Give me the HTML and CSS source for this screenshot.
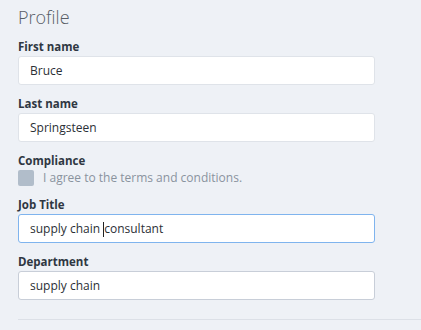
FILE: index.html
```html
<!DOCTYPE html>
<html>
<head>
<meta charset="utf-8">
<link rel="stylesheet" href="styles.css">
</head>
<body>
<div class="page">
  <h1 class="title">Profile</h1>
  <div class="field">
    <div class="label">First name</div>
    <div class="input">Bruce</div>
  </div>
  <div class="field">
    <div class="label">Last name</div>
    <div class="input">Springsteen</div>
  </div>
  <div class="field">
    <div class="label">Compliance</div>
    <div class="check-row">
      <span class="checkbox"></span>
      <span class="check-text">I agree to the terms and conditions.</span>
    </div>
  </div>
  <div class="field">
    <div class="label">Job Title</div>
    <div class="input focused">supply chain <span class="caret"></span>consultant</div>
  </div>
  <div class="field">
    <div class="label">Department</div>
    <div class="input hovered">supply chain</div>
  </div>
  <div class="divider"></div>
</div>
</body>
</html>
```

FILE: styles.css
```css
html, body {
  margin: 0;
  padding: 0;
  background: #eef1f6;
}
body {
  font-family: "Open Sans", "Noto Sans", sans-serif;
  color: #2f3742;
}
.page {
  padding: 5px 0 0 18px;
}
.title {
  margin: 0 0 10px 0;
  font-size: 18px;
  line-height: 24px;
  font-weight: 300;
  color: #585d66;
}
.field {
  margin-bottom: 11px;
  width: 357px;
}
.label {
  font-size: 11.5px;
  line-height: 16px;
  font-weight: 700;
  color: #2f3742;
  margin-bottom: 1px;
}
.input {
  box-sizing: border-box;
  height: 29px;
  width: 357px;
  padding: 0 11px;
  background: #ffffff;
  border: 1px solid #dfe3e9;
  border-radius: 3px;
  font-size: 12px;
  line-height: 27px;
  color: #2b2f36;
  white-space: pre;
}
.input.focused {
  border-color: #7fb4ee;
}
.input.hovered {
  border-color: #c8ced8;
}
.caret {
  display: inline-block;
  width: 1px;
  height: 15px;
  background: #222;
  vertical-align: -4px;
}
.check-row {
  display: flex;
  align-items: center;
  gap: 9px;
  height: 16px;
  margin-top: 0;
  margin-bottom: 3px;
}
.checkbox {
  width: 16px;
  height: 16px;
  border-radius: 2px;
  background: #b1bdca;
  flex: none;
}
.check-text {
  font-size: 12px;
  color: #8a939e;
  line-height: 16px;
}
.divider {
  margin-top: 19px;
  height: 1px;
  background: #dce0e7;
}
```
